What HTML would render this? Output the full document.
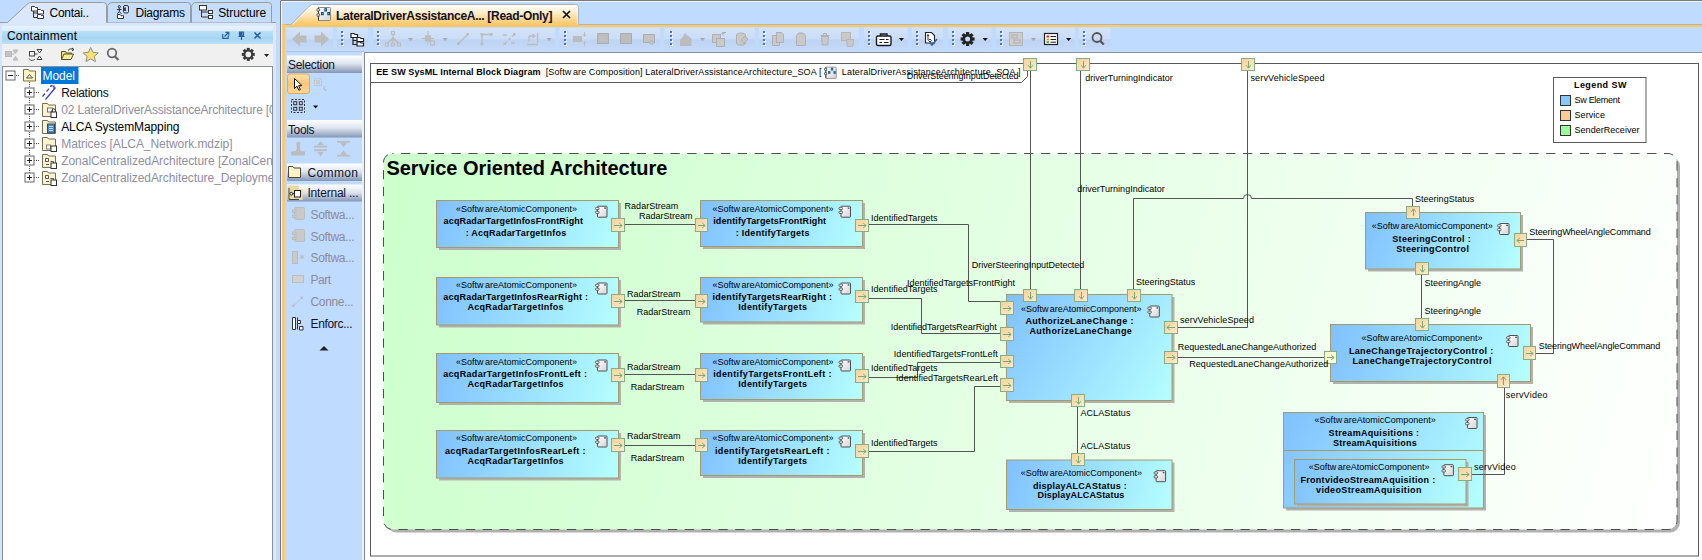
<!DOCTYPE html>
<html><head><meta charset="utf-8"><title>LateralDriverAssistanceArchitecture_SOA</title>
<style>
html,body{margin:0;padding:0;background:#bfdbff;}
body{width:1702px;height:560px;overflow:hidden;position:relative;}
svg{position:absolute;left:0;top:0;display:block;font-family:'Liberation Sans', sans-serif;}
text{white-space:pre;}
</style></head><body>
<svg width="1702" height="560" viewBox="0 0 1702 560">
<defs>
<linearGradient id="gBox" x1="0" y1="0" x2="1" y2="1"><stop offset="0" stop-color="#7dbdfd"/><stop offset="1" stop-color="#b4fdff"/></linearGradient>
<linearGradient id="gGreen" gradientUnits="userSpaceOnUse" x1="383.5" y1="153.5" x2="1677" y2="529.5"><stop offset="0" stop-color="#ccffcc"/><stop offset="1" stop-color="#ffffff"/></linearGradient>
<linearGradient id="gComp" x1="0" y1="0" x2="1" y2="1"><stop offset="0" stop-color="#ffffff"/><stop offset="1" stop-color="#d4d4d4"/></linearGradient>
<linearGradient id="gPort" x1="0" y1="0" x2="1" y2="1"><stop offset="0" stop-color="#fbd096"/><stop offset="1" stop-color="#fdecd0"/></linearGradient>
<linearGradient id="gPortY" x1="0" y1="0" x2="1" y2="1"><stop offset="0" stop-color="#fdf6c0"/><stop offset="1" stop-color="#fffff0"/></linearGradient>
<linearGradient id="gHdr" x1="0" y1="0" x2="0" y2="1"><stop offset="0" stop-color="#e8f2fc"/><stop offset="0.27" stop-color="#dcecfa"/><stop offset="0.3" stop-color="#b6dff5"/><stop offset="0.7" stop-color="#a6d6f3"/><stop offset="1" stop-color="#bce0f7"/></linearGradient>
<linearGradient id="gPal" x1="0" y1="0" x2="0" y2="1"><stop offset="0" stop-color="#ffffff"/><stop offset="0.45" stop-color="#dfe6f0"/><stop offset="1" stop-color="#8496b4"/></linearGradient>
<linearGradient id="gTab" x1="0" y1="0" x2="0" y2="1"><stop offset="0" stop-color="#fffef8"/><stop offset="0.35" stop-color="#fdf0d2"/><stop offset="0.7" stop-color="#fbd891"/><stop offset="1" stop-color="#fbc564"/></linearGradient>
<linearGradient id="gTb" x1="0" y1="0" x2="0" y2="1"><stop offset="0" stop-color="#d3e3fa"/><stop offset="0.5" stop-color="#cadcf7"/><stop offset="0.52" stop-color="#bdd3f3"/><stop offset="1" stop-color="#c6dbf8"/></linearGradient>
<linearGradient id="gSel" x1="0" y1="0" x2="0" y2="1"><stop offset="0" stop-color="#fde3b4"/><stop offset="0.5" stop-color="#fbc573"/><stop offset="1" stop-color="#fdd99a"/></linearGradient>
<clipPath id="cTree"><rect x="2" y="67" width="270" height="493"/></clipPath>
<g id="comp"><rect x="2.5" y="0.5" width="9.5" height="11" rx="0.8" fill="url(#gComp)" stroke="#505050" stroke-width="1"/><rect x="0.5" y="1.6" width="3.6" height="2.3" rx="1" fill="#ececec" stroke="#505050" stroke-width="0.9"/><rect x="0.5" y="5.5" width="3.6" height="2.3" rx="1" fill="#ececec" stroke="#505050" stroke-width="0.9"/><rect x="9.2" y="1.7" width="1.7" height="1.4" fill="#4a5a6a"/></g>
<g id="pR"><rect x="0.5" y="0.5" width="12.5" height="12.5" fill="url(#gPort)" stroke="#8db38b"/><path d="M3 6.8H10.2M7.4 4.2L10.4 6.8L7.4 9.4" fill="none" stroke="#69a06a" stroke-width="1"/></g>
<g id="pRy"><rect x="0.5" y="0.5" width="12.5" height="12.5" fill="url(#gPortY)" stroke="#8db38b"/><path d="M3 6.8H10.2M7.4 4.2L10.4 6.8L7.4 9.4" fill="none" stroke="#69a06a" stroke-width="1"/></g>
<g id="pL"><rect x="0.5" y="0.5" width="12.5" height="12.5" fill="url(#gPort)" stroke="#8db38b"/><path d="M10.5 6.8H3.3M6.1 4.2L3.1 6.8L6.1 9.4" fill="none" stroke="#69a06a" stroke-width="1"/></g>
<g id="pD"><rect x="0.5" y="0.5" width="12.5" height="12.5" fill="url(#gPort)" stroke="#8db38b"/><path d="M6.8 3V10.2M4.2 7.4L6.8 10.4L9.4 7.4" fill="none" stroke="#69a06a" stroke-width="1"/></g>
<g id="pU"><rect x="0.5" y="0.5" width="12.5" height="12.5" fill="url(#gPort)" stroke="#8db38b"/><path d="M6.8 10.5V3.3M4.2 6.1L6.8 3.1L9.4 6.1" fill="none" stroke="#69a06a" stroke-width="1"/></g>
<g id="grip"><path d="M1 1h2v2h-2zM1 5h2v2h-2zM1 9h2v2h-2zM1 13h2v2h-2z" fill="#f4f8ff"/><path d="M0 0h2v2h-2zM0 4h2v2h-2zM0 8h2v2h-2zM0 12h2v2h-2z" fill="#3f74d4"/></g>
<path id="dd" d="M0 0h5.2L2.6 3z"/>
</defs>

<rect x="0" y="0" width="1702" height="560" fill="#bfdbff"/>
<rect x="280" y="0" width="1422" height="1" fill="#7a7a7a"/>
<path d="M0 22.5H276" stroke="#9c9c9c" fill="none"/>
<path d="M107.5 22.5V7.5Q107.5 2.500 113 2.500H187.500Q190.500 2.500 190.500 5.500V22.5" fill="#c6dcfb" stroke="#9c9c9c"/>
<path d="M191.500 22.5V7.5Q191.500 2.500 197 2.500H268.500Q271.500 2.500 271.500 5.500V22.5" fill="#c6dcfb" stroke="#9c9c9c"/>
<rect x="0" y="23" width="276" height="537" fill="#d9e7fc"/>
<rect x="0" y="23" width="1.500" height="537" fill="#d3e3fb"/>
<path d="M7 23L28 3.500Q29.500 2.500 32 2.500H103.500Q106.500 2.500 106.500 5.500V23Z" fill="#dbe8fc"/>
<path d="M0 22.5H7.500L28 3.500Q29.500 2.500 32 2.500H103.500Q106.500 2.500 106.500 5.500V22.5" fill="none" stroke="#9c9c9c"/>
<g fill="#fff" stroke="#333" stroke-width="1"><path d="M31.5 6.5h3l1 1h2v3.5h-6z"/><path d="M37.5 9.5h3l1 1h2v3.5h-6z"/><path d="M37.5 14.5h3l1 1h2v3h-6z" /><path d="M33.5 11v6.5h4M33.500 13h4" fill="none"/></g>
<g fill="none" stroke="#333" stroke-width="1"><circle cx="119.300" cy="6.700" r="1.100"/><path d="M119.300 8v3.500M117 9.500h4.600M119.300 11.500l-2 2.300M119.300 11.500l2 2.300"/><rect x="123.500" y="5.500" width="5" height="7.500" rx="1.500"/><path d="M125 7.500v3.500" stroke-width="1.800"/><path d="M117.500 18.500v-4h2.500l1 1.200h2.500v2.800z" fill="#fff"/></g>
<g fill="#fff" stroke="#333" stroke-width="1"><rect x="199.500" y="5.500" width="7" height="4.500"/><rect x="208.500" y="10.500" width="4" height="3"/><rect x="208.500" y="15.500" width="4" height="3"/><path d="M201.500 10v7h7M201.500 12h7" fill="none"/></g>
<text x="49.5" y="17" font-size="12" textLength="39.5" lengthAdjust="spacing">Contai..</text>
<text x="135.5" y="17" font-size="12" textLength="49.5" lengthAdjust="spacing">Diagrams</text>
<text x="218.2" y="17" font-size="12" textLength="48" lengthAdjust="spacing">Structure</text>
<rect x="2" y="26" width="271" height="18" fill="url(#gHdr)"/>
<text x="7" y="39.5" font-size="12" textLength="70" lengthAdjust="spacing">Containment</text>
<g fill="none" stroke="#2b5ea6" stroke-width="1.2"><path d="M222.700 34v4.300h5.500v-2.500M224.500 36.500l4-4M225.500 32.300h3.300v3.300"/><path d="M239.500 32h4v4h-4zM238.500 36.500h6M241.500 36.500v3.500" /><path d="M254.500 32.500l6 6M260.500 32.500l-6 6" stroke-width="1.6"/></g>
<rect x="240" y="32" width="2.500" height="4" fill="#2b5ea6"/>
<rect x="2" y="44" width="271" height="23" fill="#f0f0f0"/>
<g fill="#c4c4c4" stroke="#b8b8b8" stroke-width="1"><rect x="5.500" y="51.500" width="6" height="5"/><path d="M13 50l2.500 3.500l2.500-3.500zM13 60l2.500-3.500l2.500 3.500z"/><path d="M11.500 54h3" fill="none"/></g>
<g fill="none" stroke="#444" stroke-width="1"><rect x="29.500" y="51.500" width="5" height="4.500"/><path d="M37 49.500h5l-2.500 3.500zM37 59.500l2.500-3.500l2.500 3.500zM34.500 54h3M29 58.500c1.500 2.500 4 2.500 6 .5" /></g>
<g stroke="#5a5020" stroke-width="1"><path d="M61.500 59.500v-8h4l1 1.500h5v2.500" fill="#f6e27c"/><path d="M61.500 59.500l2.500-5.500h9.500l-2.500 5.500z" fill="#fbec96"/><path d="M68 50.500c1.500-2 4-2 5.500-1M72 48l2 1.500l-2 1.500" fill="none" stroke="#333"/></g>
<path d="M90.700 47.500l2.300 4.800l5.200.6l-3.900 3.500l1.100 5.200l-4.700-2.700l-4.700 2.700l1.100-5.200l-3.900-3.500l5.200-.6z" fill="#f6e46e" stroke="#8d8d8d" stroke-width="1"/>
<g fill="none" stroke="#666" stroke-width="1.700"><circle cx="112" cy="53" r="4.300"/><path d="M115 56.500l3.500 3.500" stroke-width="2.200"/></g>
<g transform="translate(248.300,54.400)"><g fill="#3a3a3a"><circle r="4.900"/><rect x="-1.500" y="-6.500" width="3" height="13"/><rect x="-1.500" y="-6.500" width="3" height="13" transform="rotate(45)"/><rect x="-1.500" y="-6.500" width="3" height="13" transform="rotate(90)"/><rect x="-1.500" y="-6.500" width="3" height="13" transform="rotate(135)"/></g><circle r="2.800" fill="#f0f0f0"/></g>
<use href="#dd" x="264" y="54" fill="#222"/>
<rect x="2.500" y="66.500" width="270" height="500" fill="#fff" stroke="#8a8f99"/>
<g clip-path="url(#cTree)">
<path d="M16 75.500h4M29.500 80v97M34 92.500h6M34 109.500h6M34 126.500h6M34 143.500h6M34 160.500h6M34 177.500h6" stroke="#555" stroke-dasharray="1 1" fill="none"/>
<rect x="6.0" y="71.0" width="9" height="9" fill="#fff" stroke="#666"/>
<path d="M8.0 75.5h5" stroke="#222" fill="none"/>
<rect x="25.0" y="88.0" width="9" height="9" fill="#fff" stroke="#666"/>
<path d="M27.0 92.5h5M29.5 90.0v5" stroke="#222" fill="none"/>
<rect x="25.0" y="105.0" width="9" height="9" fill="#fff" stroke="#666"/>
<path d="M27.0 109.5h5M29.5 107.0v5" stroke="#222" fill="none"/>
<rect x="25.0" y="122.0" width="9" height="9" fill="#fff" stroke="#666"/>
<path d="M27.0 126.5h5M29.5 124.0v5" stroke="#222" fill="none"/>
<rect x="25.0" y="139.0" width="9" height="9" fill="#fff" stroke="#666"/>
<path d="M27.0 143.5h5M29.5 141.0v5" stroke="#222" fill="none"/>
<rect x="25.0" y="156.0" width="9" height="9" fill="#fff" stroke="#666"/>
<path d="M27.0 160.5h5M29.5 158.0v5" stroke="#222" fill="none"/>
<rect x="25.0" y="173.0" width="9" height="9" fill="#fff" stroke="#666"/>
<path d="M27.0 177.5h5M29.5 175.0v5" stroke="#222" fill="none"/>
<path d="M23.500 69.500h5l1 1.500h6v10h-12z" fill="#fbf4c4" stroke="#7a7040"/><path d="M26.500 78l3-3.500l3 3.500z" fill="none" stroke="#444" stroke-width=".9"/>
<rect x="41" y="67" width="37.500" height="17" fill="#0078d7"/>
<text x="42.5" y="80" font-size="12" fill="#fff" textLength="32.5" lengthAdjust="spacing">Model</text>
<path d="M42.500 96.500l2.500-3M46.500 91.700l2.500-3M50.500 86.900l1.500-1.800M50 86h4v4M45.500 99.500l10-12" fill="none" stroke="#3a3ac0" stroke-width="1.200"/>
<text x="61.2" y="96.8" font-size="12" fill="#0a0a28" textLength="47.5" lengthAdjust="spacing">Relations</text>
<path d="M42.500 103.5h5l1 1.500h7v11.500h-13z" fill="#faf3cf" stroke="#777050"/>
<rect x="47.500" y="108.0" width="5" height="4" fill="#fff" stroke="#555" stroke-width=".8"/><rect x="51" y="112.0" width="5.500" height="5.500" fill="#fff" stroke="#333"/><path d="M52 112.0v-1.500a1.700 1.700 0 0 1 3.400 0v1.500" fill="none" stroke="#333"/>
<text x="61.2" y="113.8" font-size="12" fill="#8e8e9e" textLength="214.5" lengthAdjust="spacing">02 LateralDriverAssistanceArchitecture [0</text>
<path d="M42.500 120.5h5l1 1.500h7v11.500h-13z" fill="#faf3cf" stroke="#777050"/>
<rect x="47.500" y="124.0" width="7" height="9" fill="#4a86c8" stroke="#446"/><path d="M49 126.5h4M49 128.5h4M49 130.5h4" stroke="#cfe" stroke-width=".8"/>
<text x="61.2" y="130.8" font-size="12" textLength="118.3" lengthAdjust="spacing">ALCA SystemMapping</text>
<path d="M42.500 137.5h5l1 1.500h7v11.500h-13z" fill="#faf3cf" stroke="#777050"/>
<rect x="46.500" y="145.0" width="4" height="4" fill="#fff" stroke="#666" stroke-width=".8"/><rect x="51" y="146.0" width="5.500" height="5.500" fill="#fff" stroke="#333"/>
<text x="61.2" y="147.8" font-size="12" fill="#8e8e9e" textLength="171.3" lengthAdjust="spacing">Matrices [ALCA_Network.mdzip]</text>
<path d="M42.500 154.5h5l1 1.500h7v11.500h-13z" fill="#faf3cf" stroke="#777050"/>
<path d="M45.500 158.5h3v3h-3zM50.500 161.5h3v3M46 164.5h3" fill="#fff" stroke="#444" stroke-width=".9"/><rect x="51" y="163.0" width="5.500" height="5.500" fill="#fff" stroke="#333"/>
<text x="61.2" y="164.8" font-size="12" fill="#8e8e9e" textLength="250" lengthAdjust="spacing">ZonalCentralizedArchitecture [ZonalCentralized</text>
<path d="M42.500 171.5h5l1 1.500h7v11.500h-13z" fill="#faf3cf" stroke="#777050"/>
<path d="M45.500 175.5h3v3h-3zM50.500 178.5h3v3M46 181.5h3" fill="#fff" stroke="#444" stroke-width=".9"/><rect x="51" y="180.0" width="5.500" height="5.500" fill="#fff" stroke="#333"/>
<text x="61.2" y="181.8" font-size="12" fill="#8e8e9e" textLength="223" lengthAdjust="spacing">ZonalCentralizedArchitecture_Deployment</text>
</g>
<rect x="273" y="23" width="3" height="537" fill="#dbe8fc"/>
<rect x="276" y="0" width="4.500" height="560" fill="#bfdbff"/>
<rect x="280" y="1" width="1" height="559" fill="#787878"/>
<rect x="281" y="1" width="1" height="559" fill="#f2f4f8"/>
<rect x="281" y="1" width="1421" height="1" fill="#f2f4f8"/>
<rect x="282" y="24" width="1420" height="1" fill="#a3adbd"/>
<rect x="282" y="24.700" width="1420" height="2.300" fill="#fcc968"/>
<path d="M290.500 25.500L309 6.500Q311 4.500 314 4.500H575.500Q578.500 4.500 578.500 7.500V25.500Z" fill="url(#gTab)"/>
<path d="M290.500 25L309 6.500Q311 4.500 314 4.500H575.500Q578.500 4.500 578.500 7.500V24.500" fill="none" stroke="#a7b0c2" stroke-width="1"/>
<path d="M292.500 24.500L310 7Q311.500 5.500 314 5.500H575.500Q577.500 5.500 577.500 7.500V24.500" fill="none" stroke="#ffffff" stroke-opacity=".7" stroke-width="1"/>
<rect x="282.300" y="24" width="2.900" height="536" fill="#fcc968"/>
<g id="ibd" transform="translate(317,7)"><rect x="1.500" y=".500" width="12" height="13" rx=".8" fill="url(#gComp)" stroke="#8a8a8a"/><path d="M1.500 .500v13" stroke="#333" fill="none"/><rect x="0" y="1.700" width="2.600" height="2.500" rx=".6" fill="#e8e8e8" stroke="#333" stroke-width=".8"/><rect x="0" y="6.800" width="2.600" height="2.500" rx=".6" fill="#e8e8e8" stroke="#333" stroke-width=".8"/><g fill="#0c4c7c"><rect x="7.300" y="1.200" width="2.700" height="3.300"/><rect x="4" y="5" width="2.800" height="3.200"/><rect x="10.300" y="5" width="2.700" height="3.200"/></g><g fill="#6ec0ee"><rect x="8.200" y="2.200" width=".9" height="1.200"/><rect x="5" y="6" width=".9" height="1.200"/><rect x="11.300" y="6" width=".9" height="1.200"/></g></g>
<text x="336" y="19.5" font-size="12" font-weight="bold" fill="#10102a" textLength="216.5" lengthAdjust="spacing">LateralDriverAssistanceA... [Read-Only]</text>
<path d="M563 11l7 7M570 11l-7 7" stroke="#111" stroke-width="1.700" fill="none"/>
<rect x="286.500" y="27" width="1415.500" height="25" fill="#bfdbff"/>
<rect x="287" y="27.500" width="46" height="23.500" fill="url(#gTb)"/>
<rect x="337" y="27.500" width="31" height="23.500" fill="url(#gTb)"/>
<rect x="373" y="27.500" width="182" height="23.500" fill="url(#gTb)"/>
<rect x="559.5" y="27.500" width="100.5" height="23.500" fill="url(#gTb)"/>
<rect x="664.5" y="27.500" width="90.0" height="23.500" fill="url(#gTb)"/>
<rect x="759" y="27.500" width="100" height="23.500" fill="url(#gTb)"/>
<rect x="864" y="27.500" width="43.5" height="23.500" fill="url(#gTb)"/>
<rect x="912" y="27.500" width="31" height="23.500" fill="url(#gTb)"/>
<rect x="948" y="27.500" width="43.5" height="23.500" fill="url(#gTb)"/>
<rect x="996" y="27.500" width="78.5" height="23.500" fill="url(#gTb)"/>
<rect x="1078.5" y="27.500" width="32.0" height="23.500" fill="url(#gTb)"/>
<rect x="286.500" y="51.300" width="78" height="1" fill="#a9bddb"/>
<use href="#grip" x="341" y="31"/>
<use href="#grip" x="377" y="31"/>
<use href="#grip" x="564" y="31"/>
<use href="#grip" x="670" y="31"/>
<use href="#grip" x="763" y="31"/>
<use href="#grip" x="868" y="31"/>
<use href="#grip" x="916" y="31"/>
<use href="#grip" x="952" y="31"/>
<use href="#grip" x="1000" y="31"/>
<use href="#grip" x="1083" y="31"/>
<path d="M292 39L300 31.500V35.500H306.500V42.500H300V46.500Z" fill="#bcbcbc"/><path d="M329 39L321 31.500V35.500H314.500V42.500H321V46.500Z" fill="#bcbcbc"/>
<g fill="#fff" stroke="#222" stroke-width="1.200"><path d="M351 33.500h3l1 1h2.500v3h-6.500z"/><path d="M357 37.500h3l1 1h2.500v3h-6.500z"/><path d="M357 42h3l1 1h2.500v3h-6.500z"/><path d="M353 37.500v7h4M353 40.500h4" fill="none"/></g>
<g fill="none" stroke="#bcbcbc" stroke-width="1.200"><rect x="391.500" y="31.500" width="3" height="3"/><path d="M393 34.500v3M393 37.500l-5.500 5.500M393 37.500l5.500 5.500M393 37.500v5.500M389.500 40.500h7"/><rect x="385.500" y="43" width="3" height="3"/><rect x="391.500" y="43" width="3" height="3"/><rect x="397.500" y="43" width="3" height="3"/></g>
<use href="#dd" x="408" y="38" fill="#a9a9a9"/>
<g fill="none" stroke="#bcbcbc" stroke-width="1.200"><path d="M428 31v5M428 41.500v3M421.500 38.500h4M431 38.500h3"/><rect x="425.500" y="36" width="5" height="5" fill="#bcbcbc"/><rect x="430.500" y="41" width="4" height="4"/></g>
<use href="#dd" x="442.500" y="38" fill="#a9a9a9"/>
<g fill="#bcbcbc" stroke="#bcbcbc" stroke-width="1.300"><path d="M458.500 43.500l9-9" fill="none"/><rect x="457" y="42.500" width="2.500" height="2.500" stroke="none"/><rect x="466.500" y="33" width="2.500" height="2.500" stroke="none"/></g>
<g fill="#bcbcbc" stroke="#bcbcbc" stroke-width="1.300"><path d="M482 44v-9.500h9.500" fill="none"/><rect x="480.500" y="42.500" width="2.800" height="2.800" stroke="none"/><rect x="480.500" y="33" width="2.800" height="2.800" stroke="none"/><rect x="490" y="33" width="2.800" height="2.800" stroke="none"/></g>
<g fill="#bcbcbc" stroke="#bcbcbc" stroke-width="1.300"><path d="M505 43.500l9-9" fill="none" stroke-dasharray="3 2"/><rect x="503.500" y="42.500" width="2.500" height="2.500" stroke="none"/><rect x="513" y="33" width="2.500" height="2.500" stroke="none"/><path d="M503 35h4M511 43h4" fill="none"/></g>
<g fill="none" stroke="#bcbcbc" stroke-width="1.300"><path d="M537.500 33v10M529 36h5.500M532.500 34l2.500 2l-2.500 2M529 36v5.500M527 44.500h11" /></g>
<use href="#dd" x="546.500" y="38" fill="#a9a9a9"/>
<g fill="#bcbcbc" stroke="#bcbcbc"><rect x="573.500" y="36.500" width="8" height="5"/><path d="M584.500 32v4M583 34.500l1.500 2l1.500-2M584.500 46v-4M583 43.500l1.500-2l1.500 2" fill="none"/></g>
<rect x="597.500" y="33.500" width="11" height="10" fill="#bcbcbc" stroke="#adadad"/><path d="M599.500 37h7M599.500 40h7" stroke="#c9c9c9" stroke-dasharray="2 1"/>
<rect x="620.500" y="33.500" width="11" height="10" fill="#bcbcbc" stroke="#adadad"/>
<rect x="643.500" y="34.500" width="11" height="8" fill="#c4c4c4" stroke="#adadad"/><rect x="650" y="41" width="3" height="3" fill="#c9c9c9" stroke="#adadad" stroke-width=".7"/>
<path d="M680 46v-6l5.500-6l6 4.500v7.500z" fill="#bcbcbc"/><path d="M683.500 35.500l2-2.500" stroke="#bcbcbc" fill="none"/>
<use href="#dd" x="700" y="38" fill="#a9a9a9"/>
<g fill="#c9c9c9" stroke="#b0b0b0"><rect x="712.500" y="34.500" width="8" height="8"/><rect x="716.500" y="38.500" width="8" height="8"/><path d="M723 35.500v-3h3M721.500 34l1.500-2l1.500 2" fill="none"/></g>
<g fill="#c9c9c9" stroke="#b0b0b0"><ellipse cx="741" cy="35" rx="4.500" ry="2"/><path d="M736.500 35v8c0 3 9 3 9 0v-8" /><path d="M741 40l4-4l3 3l-4 5z" fill="#c4c4c4"/></g>
<g fill="#c9c9c9" stroke="#b0b0b0"><path d="M772.500 35.500h5l2 2v8h-7z"/><path d="M776.500 32.500h5l2 2v8h-7z"/></g>
<path d="M796.500 45.500v-10l2-2.500h5l2 2.500v10z" fill="#c9c9c9" stroke="#b0b0b0"/>
<g fill="#c9c9c9" stroke="#b0b0b0"><path d="M821.500 36.500h7l-.8 8.500h-5.400z"/><path d="M820.500 35.500h9M823.500 35v-1.500h3v1.500" fill="none"/></g>
<g fill="#c9c9c9" stroke="#b6b6b6"><rect x="841.500" y="32.500" width="9" height="8"/><path d="M846.500 39.500h7l-.7 7h-5.600z"/></g>
<g fill="none" stroke="#1a1a1a" stroke-width="1.400"><rect x="876.500" y="36" width="14.500" height="9.500" rx="1.500" fill="#fff"/><path d="M880.500 36v-2h6.500v2"/><path d="M879.500 39.500h5M886 39.500h2.500M879.500 42.500h2.500M884 42.500h4.500" stroke-width="1.200"/></g>
<use href="#dd" x="898.800" y="38" fill="#111"/>
<g fill="#fff" stroke="#222" stroke-width="1.100"><path d="M925.500 32.500h6l3 3v7.500h-9z"/><path d="M928 35v5M927 36l1-1.500l1 1.500M928.500 40.500l1.500 1.500l1.500-1.500l-1.500-1.500z" fill="none" stroke-width=".9"/><path d="M930 42.500l2 2.500l5-6" fill="none" stroke="#2a5ea8" stroke-width="1.500"/></g>
<g transform="translate(967.600,39)"><g fill="#222"><circle r="5"/><rect x="-1.600" y="-7" width="3.200" height="14"/><rect x="-1.600" y="-7" width="3.200" height="14" transform="rotate(45)"/><rect x="-1.600" y="-7" width="3.200" height="14" transform="rotate(90)"/><rect x="-1.600" y="-7" width="3.200" height="14" transform="rotate(135)"/></g><circle r="2.500" fill="#c6dbf8"/></g>
<use href="#dd" x="982.600" y="38" fill="#111"/>
<rect x="1009.500" y="32.500" width="13" height="13" fill="#cdcdcd" stroke="#b5b5b5"/><rect x="1012" y="35" width="5" height="3" fill="none" stroke="#b0b0b0"/><rect x="1014" y="40" width="6" height="3" fill="none" stroke="#b0b0b0"/>
<use href="#dd" x="1030.800" y="38" fill="#a9a9a9"/>
<rect x="1044.500" y="33.500" width="13" height="11" fill="#fff" stroke="#222" stroke-width="1.200"/><rect x="1046.500" y="35.500" width="2.500" height="2" fill="#e03030"/><rect x="1046.500" y="38.500" width="2.500" height="2" fill="#f0a020"/><rect x="1046.500" y="41.200" width="2.500" height="2" fill="#40b040"/><path d="M1050.500 36.500h5.500M1050.500 39.500h5.500M1050.500 42.200h5.500" stroke="#222"/>
<use href="#dd" x="1066" y="38" fill="#111"/>
<g fill="none" stroke="#555" stroke-width="1.800"><circle cx="1097" cy="37.500" r="4.500"/><path d="M1100.300 41l3.500 3.500" stroke-width="2.300"/></g>
<rect x="286.500" y="52.500" width="76.500" height="508" fill="#bfdbff"/>
<rect x="287" y="55.5" width="75.500" height="17.5" fill="url(#gPal)"/>
<text x="288" y="68.7" font-size="12" fill="#10102a" textLength="47" lengthAdjust="spacing">Selection</text>
<rect x="287.500" y="74" width="22" height="19.500" rx="2.500" fill="url(#gSel)" stroke="#eaa848"/>
<path d="M294.500 78.500v10l2.500-2.300l1.800 4l1.600-.7l-1.800-3.900h3.400z" fill="#fff" stroke="#111" stroke-width="1"/>
<g fill="none" stroke="#b9b9b9"><rect x="314.500" y="78.500" width="7" height="7" stroke-dasharray="1.500 1" /><rect x="316" y="80" width="4" height="4" fill="#c9c9c9" stroke="none"/><path d="M324 86v4l1-1l1 2" /></g>
<g transform="translate(0,1)" fill="none" stroke="#333" stroke-width="1"><rect x="291.500" y="98.500" width="13" height="13" stroke-dasharray="2 1.500"/><rect x="293.700" y="100.700" width="3" height="3"/><rect x="299.300" y="100.700" width="3" height="3"/><rect x="293.700" y="106.300" width="3" height="3"/><rect x="299.300" y="106.300" width="3" height="3"/></g>
<use href="#dd" x="313" y="105.500" fill="#111"/>
<rect x="287" y="120" width="75.500" height="17.5" fill="url(#gPal)"/>
<text x="288" y="134.2" font-size="12" fill="#10102a" textLength="26.5" lengthAdjust="spacing">Tools</text>
<g fill="#bcbcbc"><path d="M296.200 142.500q2-1 4.200 0l-.6 5.500q0 2.500 1.700 3.300h-6.400q1.700-.8 1.700-3.300z"/><rect x="291" y="151.300" width="14" height="4.300" rx="1"/></g>
<g fill="#bcbcbc"><rect x="314" y="145.700" width="13" height="1.700"/><rect x="314" y="149.300" width="13" height="1.700"/><path d="M317 145.200l3.500-4l3.500 4zM317 151.700l3.500 4.500l3.500-4.500z"/></g>
<g fill="#bcbcbc"><rect x="337" y="141" width="13" height="1.700"/><rect x="337" y="154.800" width="13" height="1.700"/><path d="M340 143l3.500 4.300l3.500-4.300zM340 154.500l3.500-4.300l3.500 4.300z"/><rect x="342.800" y="142" width="1.400" height="3"/><rect x="342.800" y="152" width="1.400" height="3"/></g>
<rect x="287" y="163.5" width="75.500" height="17.5" fill="url(#gPal)"/>
<text x="307.5" y="176.7" font-size="12" fill="#10102a" textLength="50.5" lengthAdjust="spacing">Common</text>
<path d="M288.500 166.500h4.500l1 1.500h6.500v9.500h-12z" fill="#fbf3c4" stroke="#4a4a40"/>
<rect x="287" y="184.5" width="75.500" height="17" fill="url(#gPal)"/>
<text x="307.5" y="197.2" font-size="12" fill="#10102a" textLength="51" lengthAdjust="spacing">Internal ...</text>
<path d="M287.500 185.500h11.500l3.500 3.500v11h-15z" fill="#e9d9a2"/><path d="M299 185.500l3.500 3.500h-3.500z" fill="#fff"/><g fill="#fff" stroke="#222" stroke-width="1"><rect x="294.500" y="190.500" width="6" height="6.500"/><circle cx="291.300" cy="193.700" r="1.400"/><path d="M292.700 193.700h1.800" fill="none"/></g><path d="M289 188v11.500h10" fill="none" stroke="#333" stroke-width=".9"/>
<text x="310.5" y="219.0" font-size="12" fill="#8b8b9b" textLength="44" lengthAdjust="spacing">Softwa...</text>
<text x="310.5" y="240.5" font-size="12" fill="#8b8b9b" textLength="44" lengthAdjust="spacing">Softwa...</text>
<text x="310.5" y="262.0" font-size="12" fill="#8b8b9b" textLength="44" lengthAdjust="spacing">Softwa...</text>
<text x="310.5" y="284.0" font-size="12" fill="#8b8b9b" textLength="20.5" lengthAdjust="spacing">Part</text>
<text x="310.5" y="306.0" font-size="12" fill="#8b8b9b" textLength="43" lengthAdjust="spacing">Conne...</text>
<text x="310.5" y="328.0" font-size="12" fill="#10102a" textLength="42" lengthAdjust="spacing">Enforc...</text>
<g fill="#c9c9c9" stroke="#bdbdbd"><rect x="294.500" y="207.500" width="10" height="12" rx="1"/><rect x="292.500" y="210" width="3.500" height="2.500"/><rect x="292.500" y="215" width="3.500" height="2.500"/></g>
<g fill="#c9c9c9" stroke="#bdbdbd"><rect x="294.500" y="229.500" width="10" height="12" rx="1"/><rect x="292.500" y="232" width="3.500" height="2.500"/><rect x="292.500" y="237" width="3.500" height="2.500"/></g>
<rect x="292.500" y="251.500" width="5" height="12" fill="#c9c9c9" stroke="#bdbdbd"/><path d="M302 254.500v5M299.800 255.800l4.400 2.400M299.800 258.200l4.400-2.400" stroke="#bdbdbd" fill="none"/>
<rect x="292.500" y="275.500" width="11" height="7" fill="#d2d2d2" stroke="#bdbdbd"/>
<path d="M293.500 306l8-8" stroke="#c0c0c0" fill="none"/><rect x="292" y="304.500" width="2.500" height="2.500" fill="#c0c0c0"/><rect x="300.500" y="296.500" width="2.500" height="2.500" fill="#c0c0c0"/>
<g fill="#fff" stroke="#333" stroke-width="1"><path d="M292.500 317.500h3v12h-3z"/><path d="M297.500 317.500v12M297.500 320.500h3v3h-3M299.500 326.500h3.500v3.500h-3.500z"/></g>
<path d="M319.500 350.500l4.500-4.500l4.500 4.500z" fill="#222"/>
<rect x="362" y="52" width="1340" height="508" fill="#fff"/>
<rect x="362" y="52" width="2" height="508" fill="#eef1f6"/>
<rect x="364" y="52" width="1" height="508" fill="#80868e"/>
<rect x="364" y="52" width="1338" height="1" fill="#8a919b"/>
<rect x="370.500" y="63.500" width="1328" height="492.500" fill="#fff" stroke="#5a5a5a"/>
<path d="M370.500 82.500H1021.500L1027.500 76.500V63.500" fill="none" stroke="#5a5a5a"/>
<text x="376.2" y="75" font-size="9" font-weight="bold" textLength="164.3" lengthAdjust="spacing">EE SW SysML Internal Block Diagram</text>
<text x="545.700" y="75" font-size="9" textLength="275.700" lengthAdjust="spacing">[Softw<tspan dx="1.5">are Composition] LateralDriverAssistanceArchitecture_SOA [</tspan></text>
<g transform="translate(824.500,66.700) scale(.87)"><rect x="1.500" y=".500" width="12" height="13" rx=".8" fill="url(#gComp)" stroke="#8a8a8a"/><path d="M1.500 .500v13" stroke="#333" fill="none"/><rect x="0" y="1.700" width="2.600" height="2.500" rx=".6" fill="#e8e8e8" stroke="#333" stroke-width=".8"/><rect x="0" y="6.800" width="2.600" height="2.500" rx=".6" fill="#e8e8e8" stroke="#333" stroke-width=".8"/><g fill="#2a6a9c"><rect x="7.300" y="1.200" width="2.700" height="3.300"/><rect x="4" y="5" width="2.800" height="3.200"/><rect x="10.300" y="5" width="2.700" height="3.200"/></g></g>
<text x="841.8" y="75" font-size="9" textLength="178.6" lengthAdjust="spacing">LateralDriverAssistanceArchitecture_SOA ]</text>
<text x="906.8" y="79.3" font-size="9" textLength="111.8" lengthAdjust="spacing">DriverSteeringInputDetected</text>
<text x="1085.2" y="80.7" font-size="9" textLength="87.5" lengthAdjust="spacing">driverTurningIndicator</text>
<text x="1250.5" y="80.7" font-size="9" textLength="74" lengthAdjust="spacing">servVehicleSpeed</text>
<rect x="1553.500" y="77.500" width="92.500" height="65" fill="#fff" stroke="#5a5a5a"/>
<text x="1574" y="88.1" font-size="9" font-weight="bold" textLength="52.4" lengthAdjust="spacing">Legend SW</text>
<rect x="1560.500" y="95.5" width="10" height="10" fill="#8cc6ff" stroke="#333"/>
<text x="1574.5" y="102.9" font-size="9" textLength="45.4" lengthAdjust="spacing">Sw Element</text>
<rect x="1560.500" y="110.5" width="10" height="10" fill="#fbcb98" stroke="#333"/>
<text x="1574.5" y="117.9" font-size="9" textLength="30.4" lengthAdjust="spacing">Service</text>
<rect x="1560.500" y="125.5" width="10" height="10" fill="#9cfc9c" stroke="#333"/>
<text x="1574.5" y="133.4" font-size="9" textLength="65" lengthAdjust="spacing">SenderReceiver</text>
<rect x="386.500" y="156.500" width="1293.500" height="376" rx="10" fill="#b0b0b0"/>
<rect x="383.500" y="153.500" width="1293.500" height="376" rx="9" fill="url(#gGreen)" stroke="#4f4f4f" stroke-dasharray="9.3 7.54" stroke-dashoffset="8.34"/>
<text x="386.4" y="174.5" font-size="20" font-weight="bold" textLength="281" lengthAdjust="spacing">Service Oriented Architecture</text>
<linearGradient id="b1" gradientUnits="userSpaceOnUse" x1="436.5" y1="200.5" x2="618.5" y2="247.5"><stop offset="0" stop-color="#80c0ff"/><stop offset="1" stop-color="#b6ffff"/></linearGradient>
<rect x="439.0" y="203.0" width="182.0" height="47.0" fill="#b1b1ae"/>
<rect x="436.5" y="200.5" width="182.0" height="47.0" fill="url(#b1)" stroke="#a39b70"/>
<linearGradient id="b2" gradientUnits="userSpaceOnUse" x1="436.5" y1="277.5" x2="618.5" y2="325"><stop offset="0" stop-color="#80c0ff"/><stop offset="1" stop-color="#b6ffff"/></linearGradient>
<rect x="439.0" y="280.0" width="182.0" height="47.5" fill="#b1b1ae"/>
<rect x="436.5" y="277.5" width="182.0" height="47.5" fill="url(#b2)" stroke="#a39b70"/>
<linearGradient id="b3" gradientUnits="userSpaceOnUse" x1="436.5" y1="353.5" x2="618.5" y2="402.5"><stop offset="0" stop-color="#80c0ff"/><stop offset="1" stop-color="#b6ffff"/></linearGradient>
<rect x="439.0" y="356.0" width="182.0" height="49.0" fill="#b1b1ae"/>
<rect x="436.5" y="353.5" width="182.0" height="49.0" fill="url(#b3)" stroke="#a39b70"/>
<linearGradient id="b4" gradientUnits="userSpaceOnUse" x1="436.5" y1="430.5" x2="618.5" y2="478"><stop offset="0" stop-color="#80c0ff"/><stop offset="1" stop-color="#b6ffff"/></linearGradient>
<rect x="439.0" y="433.0" width="182.0" height="47.5" fill="#b1b1ae"/>
<rect x="436.5" y="430.5" width="182.0" height="47.5" fill="url(#b4)" stroke="#a39b70"/>
<linearGradient id="b5" gradientUnits="userSpaceOnUse" x1="700.5" y1="200.5" x2="862.5" y2="246.5"><stop offset="0" stop-color="#80c0ff"/><stop offset="1" stop-color="#b6ffff"/></linearGradient>
<rect x="703.0" y="203.0" width="162.0" height="46.0" fill="#b1b1ae"/>
<rect x="700.5" y="200.5" width="162.0" height="46.0" fill="url(#b5)" stroke="#a39b70"/>
<linearGradient id="b6" gradientUnits="userSpaceOnUse" x1="700.5" y1="277.5" x2="862.5" y2="322"><stop offset="0" stop-color="#80c0ff"/><stop offset="1" stop-color="#b6ffff"/></linearGradient>
<rect x="703.0" y="280.0" width="162.0" height="44.5" fill="#b1b1ae"/>
<rect x="700.5" y="277.5" width="162.0" height="44.5" fill="url(#b6)" stroke="#a39b70"/>
<linearGradient id="b7" gradientUnits="userSpaceOnUse" x1="700.5" y1="353.5" x2="862.5" y2="399.5"><stop offset="0" stop-color="#80c0ff"/><stop offset="1" stop-color="#b6ffff"/></linearGradient>
<rect x="703.0" y="356.0" width="162.0" height="46.0" fill="#b1b1ae"/>
<rect x="700.5" y="353.5" width="162.0" height="46.0" fill="url(#b7)" stroke="#a39b70"/>
<linearGradient id="b8" gradientUnits="userSpaceOnUse" x1="700.5" y1="430.5" x2="862.5" y2="475.5"><stop offset="0" stop-color="#80c0ff"/><stop offset="1" stop-color="#b6ffff"/></linearGradient>
<rect x="703.0" y="433.0" width="162.0" height="45.0" fill="#b1b1ae"/>
<rect x="700.5" y="430.5" width="162.0" height="45.0" fill="url(#b8)" stroke="#a39b70"/>
<linearGradient id="b9" gradientUnits="userSpaceOnUse" x1="1006.5" y1="294.5" x2="1172" y2="400.5"><stop offset="0" stop-color="#80c0ff"/><stop offset="1" stop-color="#b6ffff"/></linearGradient>
<rect x="1009.0" y="297.0" width="165.5" height="106.0" fill="#b1b1ae"/>
<rect x="1006.5" y="294.5" width="165.5" height="106.0" fill="url(#b9)" stroke="#a39b70"/>
<linearGradient id="b10" gradientUnits="userSpaceOnUse" x1="1006.5" y1="460" x2="1172" y2="509.5"><stop offset="0" stop-color="#80c0ff"/><stop offset="1" stop-color="#b6ffff"/></linearGradient>
<rect x="1009.0" y="462.5" width="165.5" height="49.5" fill="#b1b1ae"/>
<rect x="1006.5" y="460" width="165.5" height="49.5" fill="url(#b10)" stroke="#a39b70"/>
<linearGradient id="b11" gradientUnits="userSpaceOnUse" x1="1365.5" y1="212.5" x2="1520.5" y2="269"><stop offset="0" stop-color="#80c0ff"/><stop offset="1" stop-color="#b6ffff"/></linearGradient>
<rect x="1368.0" y="215.0" width="155.0" height="56.5" fill="#b1b1ae"/>
<rect x="1365.5" y="212.5" width="155.0" height="56.5" fill="url(#b11)" stroke="#a39b70"/>
<linearGradient id="b12" gradientUnits="userSpaceOnUse" x1="1330.5" y1="324.5" x2="1530.5" y2="381.5"><stop offset="0" stop-color="#80c0ff"/><stop offset="1" stop-color="#b6ffff"/></linearGradient>
<rect x="1333.0" y="327.0" width="200.0" height="57.0" fill="#b1b1ae"/>
<rect x="1330.5" y="324.5" width="200.0" height="57.0" fill="url(#b12)" stroke="#a39b70"/>
<linearGradient id="b13" gradientUnits="userSpaceOnUse" x1="1283.5" y1="412.5" x2="1483.5" y2="508"><stop offset="0" stop-color="#80c0ff"/><stop offset="1" stop-color="#b6ffff"/></linearGradient>
<rect x="1286.0" y="415.0" width="200.0" height="95.5" fill="#b1b1ae"/>
<rect x="1283.5" y="412.5" width="200.0" height="95.5" fill="url(#b13)" stroke="#a39b70"/>
<path d="M1283.500 450.500H1483.500" stroke="#a39b70" fill="none"/>
<linearGradient id="b14" gradientUnits="userSpaceOnUse" x1="1294.5" y1="459.5" x2="1466" y2="504"><stop offset="0" stop-color="#80c0ff"/><stop offset="1" stop-color="#b6ffff"/></linearGradient>
<rect x="1297.0" y="462.0" width="171.5" height="44.5" fill="#b1b1ae"/>
<rect x="1294.5" y="459.5" width="171.5" height="44.5" fill="url(#b14)" stroke="#a39b70"/>
<path d="M624.500 224.500H695.500 M624.500 300.500H695.500 M624.500 374.500H695.500 M624.500 445.500H695.500 M868.500 224.500H968.500V301.500H1000.500 M868.500 298.500H921.500V333.500H1000.500 M868.500 377.500H917.500V362.500H1000.500 M868.500 451.500H974.500V386.500H1000.500 M1030.500 71V289 M1080.500 71V289 M1247.500 71V327.500H1177.500 M1133.500 289V198.500H1243.500A4 4 0 0 1 1251.500 198.500H1412.500V206.500 M1177.500 357.500H1324 M1077.500 407V453.500 M1421.500 275V318 M1527 239.500H1553.500V353.500H1536 M1472 474.500H1504.500V388" fill="none" stroke="#545454"/>
<text x="456" y="211.9" font-size="9" textLength="121" lengthAdjust="spacing">«Softw<tspan dx="1.5">areAtomicComponent»</tspan></text>
<text x="443.6" y="223.6" font-size="9" font-weight="bold" textLength="139.3" lengthAdjust="spacing">acqRadarTargetInfosFrontRight</text>
<text x="465.7" y="235.5" font-size="9" font-weight="bold" textLength="100.5" lengthAdjust="spacing">: AcqRadarTargetInfos</text>
<use href="#comp" x="595" y="205.7"/>
<text x="456" y="287.5" font-size="9" textLength="121" lengthAdjust="spacing">«Softw<tspan dx="1.5">areAtomicComponent»</tspan></text>
<text x="443.2" y="300.4" font-size="9" font-weight="bold" textLength="144.7" lengthAdjust="spacing">acqRadarTargetInfosRearRight :</text>
<text x="467.5" y="310.4" font-size="9" font-weight="bold" textLength="96.1" lengthAdjust="spacing">AcqRadarTargetInfos</text>
<use href="#comp" x="595" y="282.5"/>
<text x="456" y="365.1" font-size="9" textLength="121" lengthAdjust="spacing">«Softw<tspan dx="1.5">areAtomicComponent»</tspan></text>
<text x="443.2" y="376.6" font-size="9" font-weight="bold" textLength="143.8" lengthAdjust="spacing">acqRadarTargetInfosFrontLeft :</text>
<text x="467.5" y="386.8" font-size="9" font-weight="bold" textLength="96.1" lengthAdjust="spacing">AcqRadarTargetInfos</text>
<use href="#comp" x="595" y="359.5"/>
<text x="456" y="440.9" font-size="9" textLength="121" lengthAdjust="spacing">«Softw<tspan dx="1.5">areAtomicComponent»</tspan></text>
<text x="445" y="453.6" font-size="9" font-weight="bold" textLength="140.4" lengthAdjust="spacing">acqRadarTargetInfosRearLeft :</text>
<text x="467.5" y="463.6" font-size="9" font-weight="bold" textLength="96.1" lengthAdjust="spacing">AcqRadarTargetInfos</text>
<use href="#comp" x="595" y="435.5"/>
<text x="712.5" y="211.9" font-size="9" textLength="121" lengthAdjust="spacing">«Softw<tspan dx="1.5">areAtomicComponent»</tspan></text>
<text x="713.2" y="223.6" font-size="9" font-weight="bold" textLength="112.8" lengthAdjust="spacing">identifyTargetsFrontRight</text>
<text x="735.7" y="236" font-size="9" font-weight="bold" textLength="73.9" lengthAdjust="spacing">: IdentifyTargets</text>
<use href="#comp" x="838.5" y="205.7"/>
<text x="712.5" y="287.6" font-size="9" textLength="121" lengthAdjust="spacing">«Softw<tspan dx="1.5">areAtomicComponent»</tspan></text>
<text x="712.5" y="300.4" font-size="9" font-weight="bold" textLength="119.5" lengthAdjust="spacing">identifyTargetsRearRight :</text>
<text x="738.2" y="310.4" font-size="9" font-weight="bold" textLength="68.8" lengthAdjust="spacing">IdentifyTargets</text>
<use href="#comp" x="838.5" y="282.5"/>
<text x="712.5" y="365.1" font-size="9" textLength="121" lengthAdjust="spacing">«Softw<tspan dx="1.5">areAtomicComponent»</tspan></text>
<text x="713.2" y="376.8" font-size="9" font-weight="bold" textLength="118.2" lengthAdjust="spacing">identifyTargetsFrontLeft :</text>
<text x="738.2" y="386.8" font-size="9" font-weight="bold" textLength="68.8" lengthAdjust="spacing">IdentifyTargets</text>
<use href="#comp" x="838.5" y="359.5"/>
<text x="712.5" y="440.9" font-size="9" textLength="121" lengthAdjust="spacing">«Softw<tspan dx="1.5">areAtomicComponent»</tspan></text>
<text x="715" y="453.6" font-size="9" font-weight="bold" textLength="114.6" lengthAdjust="spacing">identifyTargetsRearLeft :</text>
<text x="738.2" y="463.6" font-size="9" font-weight="bold" textLength="68.8" lengthAdjust="spacing">IdentifyTargets</text>
<use href="#comp" x="838.5" y="435.5"/>
<text x="1021" y="312.3" font-size="9" textLength="120.4" lengthAdjust="spacing">«Softw<tspan dx="1.5">areAtomicComponent»</tspan></text>
<text x="1025.4" y="323.75" font-size="9" font-weight="bold" textLength="108" lengthAdjust="spacing">AuthorizeLaneChange :</text>
<text x="1029.5" y="333.6" font-size="9" font-weight="bold" textLength="102.3" lengthAdjust="spacing">AuthorizeLaneChange</text>
<use href="#comp" x="1147.3" y="305.5"/>
<text x="1020.7" y="476.2" font-size="9" textLength="121.3" lengthAdjust="spacing">«Softw<tspan dx="1.5">areAtomicComponent»</tspan></text>
<text x="1032.9" y="489" font-size="9" font-weight="bold" textLength="93.9" lengthAdjust="spacing">displayALCAStatus :</text>
<text x="1037.5" y="498.2" font-size="9" font-weight="bold" textLength="86.8" lengthAdjust="spacing">DisplayALCAStatus</text>
<use href="#comp" x="1153.6" y="470.2"/>
<text x="1371.8" y="229.1" font-size="9" textLength="120.9" lengthAdjust="spacing">«Softw<tspan dx="1.5">areAtomicComponent»</tspan></text>
<text x="1392.3" y="241.6" font-size="9" font-weight="bold" textLength="78.4" lengthAdjust="spacing">SteeringControl :</text>
<text x="1396.25" y="251.8" font-size="9" font-weight="bold" textLength="72.65" lengthAdjust="spacing">SteeringControl</text>
<use href="#comp" x="1497" y="223"/>
<text x="1361.6" y="341.0" font-size="9" textLength="120.9" lengthAdjust="spacing">«Softw<tspan dx="1.5">areAtomicComponent»</tspan></text>
<text x="1348.9" y="353.6" font-size="9" font-weight="bold" textLength="144.3" lengthAdjust="spacing">LaneChangeTrajectoryControl :</text>
<text x="1352.5" y="363.75" font-size="9" font-weight="bold" textLength="138.9" lengthAdjust="spacing">LaneChangeTrajectoryControl</text>
<use href="#comp" x="1506" y="335"/>
<text x="1314.6" y="423.4" font-size="9" textLength="121.1" lengthAdjust="spacing">«Softw<tspan dx="1.5">areAtomicComponent»</tspan></text>
<text x="1328.6" y="435.9" font-size="9" font-weight="bold" textLength="90.5" lengthAdjust="spacing">StreamAquisitions :</text>
<text x="1332.9" y="445.7" font-size="9" font-weight="bold" textLength="83.9" lengthAdjust="spacing">StreamAquisitions</text>
<use href="#comp" x="1465" y="417"/>
<text x="1308.75" y="470.0" font-size="9" textLength="120.75" lengthAdjust="spacing">«Softw<tspan dx="1.5">areAtomicComponent»</tspan></text>
<text x="1300.4" y="482.9" font-size="9" font-weight="bold" textLength="134.8" lengthAdjust="spacing">FrontvideoStreamAquisition :</text>
<text x="1316" y="492.7" font-size="9" font-weight="bold" textLength="105.4" lengthAdjust="spacing">videoStreamAquisition</text>
<use href="#comp" x="1441.4" y="464.2"/>
<rect x="611.5" y="218.5" width="13" height="13" fill="url(#gPort)" stroke="#82b083"/>
<path d="M614 225.5H622M619.2 223.1L622.2 225.5L619.2 227.9" fill="none" stroke="#6fa670" stroke-width="0.95"/>
<rect x="695.5" y="218.5" width="12" height="13" fill="url(#gPort)" stroke="#82b083"/>
<path d="M698 225.5H705M702.2 223.1L705.2 225.5L702.2 227.9" fill="none" stroke="#6fa670" stroke-width="0.95"/>
<rect x="611.5" y="294.5" width="13" height="13" fill="url(#gPort)" stroke="#82b083"/>
<path d="M614 301.5H622M619.2 299.1L622.2 301.5L619.2 303.9" fill="none" stroke="#6fa670" stroke-width="0.95"/>
<rect x="695.5" y="294.5" width="12" height="13" fill="url(#gPort)" stroke="#82b083"/>
<path d="M698 301.5H705M702.2 299.1L705.2 301.5L702.2 303.9" fill="none" stroke="#6fa670" stroke-width="0.95"/>
<rect x="611.5" y="368.5" width="13" height="13" fill="url(#gPort)" stroke="#82b083"/>
<path d="M614 375.5H622M619.2 373.1L622.2 375.5L619.2 377.9" fill="none" stroke="#6fa670" stroke-width="0.95"/>
<rect x="695.5" y="368.5" width="12" height="13" fill="url(#gPort)" stroke="#82b083"/>
<path d="M698 375.5H705M702.2 373.1L705.2 375.5L702.2 377.9" fill="none" stroke="#6fa670" stroke-width="0.95"/>
<rect x="611.5" y="438.5" width="13" height="13" fill="url(#gPort)" stroke="#82b083"/>
<path d="M614 445.5H622M619.2 443.1L622.2 445.5L619.2 447.9" fill="none" stroke="#6fa670" stroke-width="0.95"/>
<rect x="695.5" y="438.5" width="12" height="13" fill="url(#gPort)" stroke="#82b083"/>
<path d="M698 445.5H705M702.2 443.1L705.2 445.5L702.2 447.9" fill="none" stroke="#6fa670" stroke-width="0.95"/>
<rect x="855.5" y="219.5" width="13" height="12" fill="url(#gPort)" stroke="#82b083"/>
<path d="M858 225.5H866M863.2 223.1L866.2 225.5L863.2 227.9" fill="none" stroke="#6fa670" stroke-width="0.95"/>
<rect x="855.5" y="290.5" width="13" height="12" fill="url(#gPort)" stroke="#82b083"/>
<path d="M858 296.5H866M863.2 294.1L866.2 296.5L863.2 298.9" fill="none" stroke="#6fa670" stroke-width="0.95"/>
<rect x="855.5" y="369.5" width="13" height="13" fill="url(#gPort)" stroke="#82b083"/>
<path d="M858 376.5H866M863.2 374.1L866.2 376.5L863.2 378.9" fill="none" stroke="#6fa670" stroke-width="0.95"/>
<rect x="855.5" y="444.5" width="13" height="13" fill="url(#gPort)" stroke="#82b083"/>
<path d="M858 451.5H866M863.2 449.1L866.2 451.5L863.2 453.9" fill="none" stroke="#6fa670" stroke-width="0.95"/>
<rect x="1000.5" y="301.5" width="13" height="13" fill="url(#gPort)" stroke="#82b083"/>
<path d="M1003 308.5H1011M1008.2 306.1L1011.2 308.5L1008.2 310.9" fill="none" stroke="#6fa670" stroke-width="0.95"/>
<rect x="1000.5" y="327.5" width="13" height="13" fill="url(#gPort)" stroke="#82b083"/>
<path d="M1003 334.5H1011M1008.2 332.1L1011.2 334.5L1008.2 336.9" fill="none" stroke="#6fa670" stroke-width="0.95"/>
<rect x="1000.5" y="355.5" width="13" height="12" fill="url(#gPort)" stroke="#82b083"/>
<path d="M1003 361.5H1011M1008.2 359.1L1011.2 361.5L1008.2 363.9" fill="none" stroke="#6fa670" stroke-width="0.95"/>
<rect x="1000.5" y="378.5" width="13" height="13" fill="url(#gPort)" stroke="#82b083"/>
<path d="M1003 385.5H1011M1008.2 383.1L1011.2 385.5L1008.2 387.9" fill="none" stroke="#6fa670" stroke-width="0.95"/>
<rect x="1023.5" y="289.5" width="13" height="12" fill="url(#gPort)" stroke="#82b083"/>
<path d="M1030.5 292V299M1028.1 296.2L1030.5 299.2L1032.9 296.2" fill="none" stroke="#6fa670" stroke-width="0.95"/>
<rect x="1074.5" y="289.5" width="13" height="12" fill="url(#gPort)" stroke="#82b083"/>
<path d="M1081.5 292V299M1079.1 296.2L1081.5 299.2L1083.9 296.2" fill="none" stroke="#6fa670" stroke-width="0.95"/>
<rect x="1127.5" y="289.5" width="13" height="12" fill="url(#gPort)" stroke="#82b083"/>
<path d="M1134.5 292V299M1132.1 296.2L1134.5 299.2L1136.9 296.2" fill="none" stroke="#6fa670" stroke-width="0.95"/>
<rect x="1164.5" y="321.5" width="13" height="12" fill="url(#gPort)" stroke="#82b083"/>
<path d="M1175 327.5H1167M1169.8 325.1L1166.8 327.5L1169.8 329.9" fill="none" stroke="#6fa670" stroke-width="0.95"/>
<rect x="1164.5" y="351.5" width="13" height="12" fill="url(#gPort)" stroke="#82b083"/>
<path d="M1167 357.5H1175M1172.2 355.1L1175.2 357.5L1172.2 359.9" fill="none" stroke="#6fa670" stroke-width="0.95"/>
<rect x="1071.5" y="394.5" width="13" height="12" fill="url(#gPort)" stroke="#82b083"/>
<path d="M1078.5 397V404M1076.1 401.2L1078.5 404.2L1080.9 401.2" fill="none" stroke="#6fa670" stroke-width="0.95"/>
<rect x="1071.5" y="453.5" width="13" height="12" fill="url(#gPort)" stroke="#82b083"/>
<path d="M1078.5 456V463M1076.1 460.2L1078.5 463.2L1080.9 460.2" fill="none" stroke="#6fa670" stroke-width="0.95"/>
<rect x="1023.5" y="58.5" width="13" height="12" fill="url(#gPort)" stroke="#82b083"/>
<path d="M1030.5 61V68M1028.1 65.2L1030.5 68.2L1032.9 65.2" fill="none" stroke="#6fa670" stroke-width="0.95"/>
<rect x="1076.5" y="58.5" width="13" height="12" fill="url(#gPort)" stroke="#82b083"/>
<path d="M1083.5 61V68M1081.1 65.2L1083.5 68.2L1085.9 65.2" fill="none" stroke="#6fa670" stroke-width="0.95"/>
<rect x="1241.5" y="58.5" width="13" height="12" fill="url(#gPort)" stroke="#82b083"/>
<path d="M1248.5 61V68M1246.1 65.2L1248.5 68.2L1250.9 65.2" fill="none" stroke="#6fa670" stroke-width="0.95"/>
<rect x="1406.5" y="206.5" width="13" height="12" fill="url(#gPort)" stroke="#82b083"/>
<path d="M1413.5 216V209M1411.1 211.8L1413.5 208.8L1415.9 211.8" fill="none" stroke="#6fa670" stroke-width="0.95"/>
<rect x="1514.5" y="233.5" width="12" height="13" fill="url(#gPort)" stroke="#82b083"/>
<path d="M1524 240.5H1517M1519.8 238.1L1516.8 240.5L1519.8 242.9" fill="none" stroke="#6fa670" stroke-width="0.95"/>
<rect x="1415.5" y="262.5" width="13" height="12" fill="url(#gPort)" stroke="#82b083"/>
<path d="M1422.5 265V272M1420.1 269.2L1422.5 272.2L1424.9 269.2" fill="none" stroke="#6fa670" stroke-width="0.95"/>
<rect x="1415.5" y="318.5" width="13" height="12" fill="url(#gPort)" stroke="#82b083"/>
<path d="M1422.5 321V328M1420.1 325.2L1422.5 328.2L1424.9 325.2" fill="none" stroke="#6fa670" stroke-width="0.95"/>
<rect x="1523.5" y="346.5" width="12" height="13" fill="url(#gPort)" stroke="#82b083"/>
<path d="M1526 353.5H1533M1530.2 351.1L1533.2 353.5L1530.2 355.9" fill="none" stroke="#6fa670" stroke-width="0.95"/>
<rect x="1324.5" y="351.5" width="12" height="12" fill="url(#gPortY)" stroke="#82b083"/>
<path d="M1327 357.5H1334M1331.2 355.1L1334.2 357.5L1331.2 359.9" fill="none" stroke="#6fa670" stroke-width="0.95"/>
<rect x="1497.5" y="374.5" width="12" height="13" fill="url(#gPort)" stroke="#82b083"/>
<path d="M1503.5 385V377M1501.1 379.8L1503.5 376.8L1505.9 379.8" fill="none" stroke="#6fa670" stroke-width="0.95"/>
<rect x="1458.5" y="467.5" width="13" height="13" fill="url(#gPort)" stroke="#82b083"/>
<path d="M1461 474.5H1469M1466.2 472.1L1469.2 474.5L1466.2 476.9" fill="none" stroke="#6fa670" stroke-width="0.95"/>
<text x="624.6" y="208.6" font-size="9" textLength="53.6" lengthAdjust="spacing">RadarStream</text>
<text x="639" y="219.3" font-size="9" textLength="53.6" lengthAdjust="spacing">RadarStream</text>
<text x="627" y="296.8" font-size="9" textLength="53.6" lengthAdjust="spacing">RadarStream</text>
<text x="636.8" y="315" font-size="9" textLength="53.6" lengthAdjust="spacing">RadarStream</text>
<text x="627" y="369.5" font-size="9" textLength="53.6" lengthAdjust="spacing">RadarStream</text>
<text x="630.7" y="390.4" font-size="9" textLength="53.6" lengthAdjust="spacing">RadarStream</text>
<text x="627" y="439.3" font-size="9" textLength="53.6" lengthAdjust="spacing">RadarStream</text>
<text x="630.7" y="461" font-size="9" textLength="53.6" lengthAdjust="spacing">RadarStream</text>
<text x="871" y="220.7" font-size="9" textLength="66.5" lengthAdjust="spacing">IdentifiedTargets</text>
<text x="871" y="292" font-size="9" textLength="66.5" lengthAdjust="spacing">IdentifiedTargets</text>
<text x="871" y="370.7" font-size="9" textLength="66.5" lengthAdjust="spacing">IdentifiedTargets</text>
<text x="871" y="445.9" font-size="9" textLength="66.5" lengthAdjust="spacing">IdentifiedTargets</text>
<text x="971.8" y="267.7" font-size="9" textLength="112.5" lengthAdjust="spacing">DriverSteeringInputDetected</text>
<text x="907" y="285.5" font-size="9" textLength="108" lengthAdjust="spacing">IdentifiedTargetsFrontRight</text>
<text x="890.7" y="329.6" font-size="9" textLength="106" lengthAdjust="spacing">IdentifiedTargetsRearRight</text>
<text x="893.75" y="356.8" font-size="9" textLength="104" lengthAdjust="spacing">IdentifiedTargetsFrontLeft</text>
<text x="896" y="380.7" font-size="9" textLength="102" lengthAdjust="spacing">IdentifiedTargetsRearLeft</text>
<text x="1077.3" y="192" font-size="9" textLength="87.5" lengthAdjust="spacing">driverTurningIndicator</text>
<text x="1136" y="284.6" font-size="9" textLength="59.3" lengthAdjust="spacing">SteeringStatus</text>
<text x="1180" y="322.9" font-size="9" textLength="74" lengthAdjust="spacing">servVehicleSpeed</text>
<text x="1177.7" y="349.5" font-size="9" textLength="138.5" lengthAdjust="spacing">RequestedLaneChangeAuthorized</text>
<text x="1189.3" y="367.3" font-size="9" textLength="138.9" lengthAdjust="spacing">RequestedLaneChangeAuthorized</text>
<text x="1080.4" y="416.4" font-size="9" textLength="50" lengthAdjust="spacing">ACLAStatus</text>
<text x="1080.4" y="448.6" font-size="9" textLength="50" lengthAdjust="spacing">ACLAStatus</text>
<text x="1415" y="201.8" font-size="9" textLength="59.3" lengthAdjust="spacing">SteeringStatus</text>
<text x="1529.3" y="234.5" font-size="9" textLength="121.5" lengthAdjust="spacing">SteeringWheelAngleCommand</text>
<text x="1538.75" y="348.6" font-size="9" textLength="121.5" lengthAdjust="spacing">SteeringWheelAngleCommand</text>
<text x="1424.5" y="285.7" font-size="9" textLength="56.6" lengthAdjust="spacing">SteeringAngle</text>
<text x="1424.5" y="313.75" font-size="9" textLength="56.6" lengthAdjust="spacing">SteeringAngle</text>
<text x="1505.7" y="397.9" font-size="9" textLength="41.7" lengthAdjust="spacing">servVideo</text>
<text x="1474" y="469.5" font-size="9" textLength="41.7" lengthAdjust="spacing">servVideo</text>
</svg></body></html>
